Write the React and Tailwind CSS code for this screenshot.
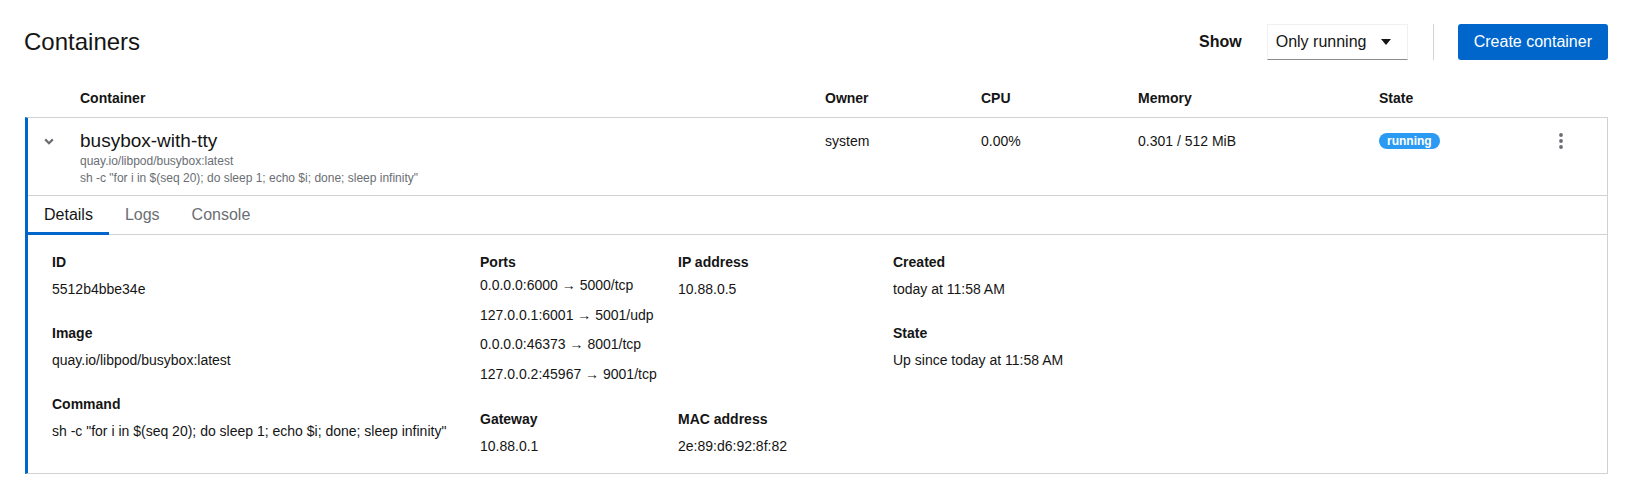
import { useState } from 'react';

const PORTS = [
  '0.0.0.0:6000 → 5000/tcp',
  '127.0.0.1:6001 → 5001/udp',
  '0.0.0.0:46373 → 8001/tcp',
  '127.0.0.2:45967 → 9001/tcp',
];

const COMMAND = 'sh -c "for i in $(seq 20); do sleep 1; echo $i; done; sleep infinity"';

// ─── Icons ──────────────────────────────────────────────────────────────────
function CaretDown() {
  return (
    <svg width="10" height="6" viewBox="0 0 10 6" className="fill-[#151515]">
      <path d="M0 0 L10 0 L5 6 Z" />
    </svg>
  );
}

function AngleDown() {
  return (
    <svg width="10" height="7" viewBox="0 0 10 7" fill="none" className="stroke-[#6a6e73]">
      <path d="M1.2 1.4 L5 5.2 L8.8 1.4" strokeWidth="2.2" />
    </svg>
  );
}

function Kebab() {
  return (
    <svg width="4" height="16" viewBox="0 0 4 16" className="fill-[#6a6e73]">
      <circle cx="2" cy="2" r="1.9" />
      <circle cx="2" cy="8" r="1.9" />
      <circle cx="2" cy="14" r="1.9" />
    </svg>
  );
}

function Item({ label, tight, children }) {
  return (
    <div className={'flex flex-col ' + (tight ? 'gap-0.5' : 'gap-1.5')}>
      <div className="text-[14px] leading-[21px] font-bold">{label}</div>
      {children}
    </div>
  );
}

function Value({ children }) {
  return <div className="text-[14px] leading-[21px]">{children}</div>;
}

function Tabs() {
  const [active, setActive] = useState('Details');
  return (
    <div className="flex h-[39px] border-b border-[#d2d2d2]">
      {['Details', 'Logs', 'Console'].map(t => (
        <button
          key={t}
          onClick={() => setActive(t)}
          className={
            'relative px-4 text-[16px] leading-6 ' +
            (t === active ? 'text-[#151515]' : 'text-[#6a6e73]')
          }
        >
          {t}
          {t === active && (
            <span className="absolute left-0 right-0 -bottom-px h-[3px] bg-[#0066cc]" />
          )}
        </button>
      ))}
    </div>
  );
}

export default function App() {
  return (
    <div className="min-h-screen bg-white px-6 text-[#151515] font-['Liberation_Sans',Arial,sans-serif]">
      {/* ─── Page header ─── */}
      <div className="flex items-center justify-between pt-6">
        <h1 className="text-[24px] leading-9">Containers</h1>
        <div className="flex items-center">
          <span className="mr-[25px] text-[16px] font-bold">Show</span>
          <button className="flex h-9 w-[141px] items-center justify-between border border-[#f0f0f0] border-b-[#8a8d90] pl-2 pr-4 text-[16px]">
            <span>Only running</span>
            <CaretDown />
          </button>
          <div className="ml-[25px] h-9 w-px bg-[#d2d2d2]" />
          <button className="ml-6 h-9 rounded-[3px] bg-[#0066cc] px-4 text-[16px] text-white">
            Create container
          </button>
        </div>
      </div>

      {/* ─── Table head ─── */}
      <div className="grid h-[57px] grid-cols-[56px_745px_156px_157px_241px_1fr] items-end pb-2 text-[14px] leading-[21px] font-bold">
        <div />
        <div>Container</div>
        <div>Owner</div>
        <div>CPU</div>
        <div>Memory</div>
        <div>State</div>
      </div>

      {/* ─── Expanded row ─── */}
      <div className="ml-px border border-[#d2d2d2] border-l-[3px] border-l-[#0066cc]">
        <div className="grid grid-cols-[52px_745px_156px_157px_241px_161px_42px_1fr] border-b border-[#d2d2d2] pt-[11px] pb-2">
          <div className="flex h-6 items-center pl-4">
            <AngleDown />
          </div>
          <div>
            <div className="text-[19px] leading-6">busybox-with-tty</div>
            <div className="text-[12px] leading-[17px] text-[#6a6e73]">quay.io/libpod/busybox:latest</div>
            <div className="text-[12px] leading-[17px] text-[#6a6e73]">{COMMAND}</div>
          </div>
          <div className="text-[14px] leading-6">system</div>
          <div className="text-[14px] leading-6">0.00%</div>
          <div className="text-[14px] leading-6">0.301 / 512 MiB</div>
          <div className="flex h-6 items-center">
            <span className="rounded-full bg-[#2b9af3] px-2 text-[12px] leading-4 font-bold text-white">running</span>
          </div>
          <div className="flex h-6 items-center justify-center">
            <Kebab />
          </div>
          <div />
        </div>

        <Tabs />

        <div className="flex pt-[17px] pb-4 pl-6">
          <div className="flex w-[428px] flex-col gap-[23px]">
            <Item label="ID"><Value>5512b4bbe34e</Value></Item>
            <Item label="Image"><Value>quay.io/libpod/busybox:latest</Value></Item>
            <Item label="Command"><Value>{COMMAND}</Value></Item>
          </div>
          <div className="grid w-[413px] grid-cols-[198px_215px] gap-y-6">
            <Item label="Ports" tight>
              <div className="flex flex-col gap-[8.5px]">
                {PORTS.map(p => <Value key={p}>{p}</Value>)}
              </div>
            </Item>
            <Item label="IP address"><Value>10.88.0.5</Value></Item>
            <Item label="Gateway"><Value>10.88.0.1</Value></Item>
            <Item label="MAC address"><Value>2e:89:d6:92:8f:82</Value></Item>
          </div>
          <div className="flex flex-col gap-[23px]">
            <Item label="Created"><Value>today at 11:58 AM</Value></Item>
            <Item label="State"><Value>Up since today at 11:58 AM</Value></Item>
          </div>
        </div>
      </div>
    </div>
  );
}
